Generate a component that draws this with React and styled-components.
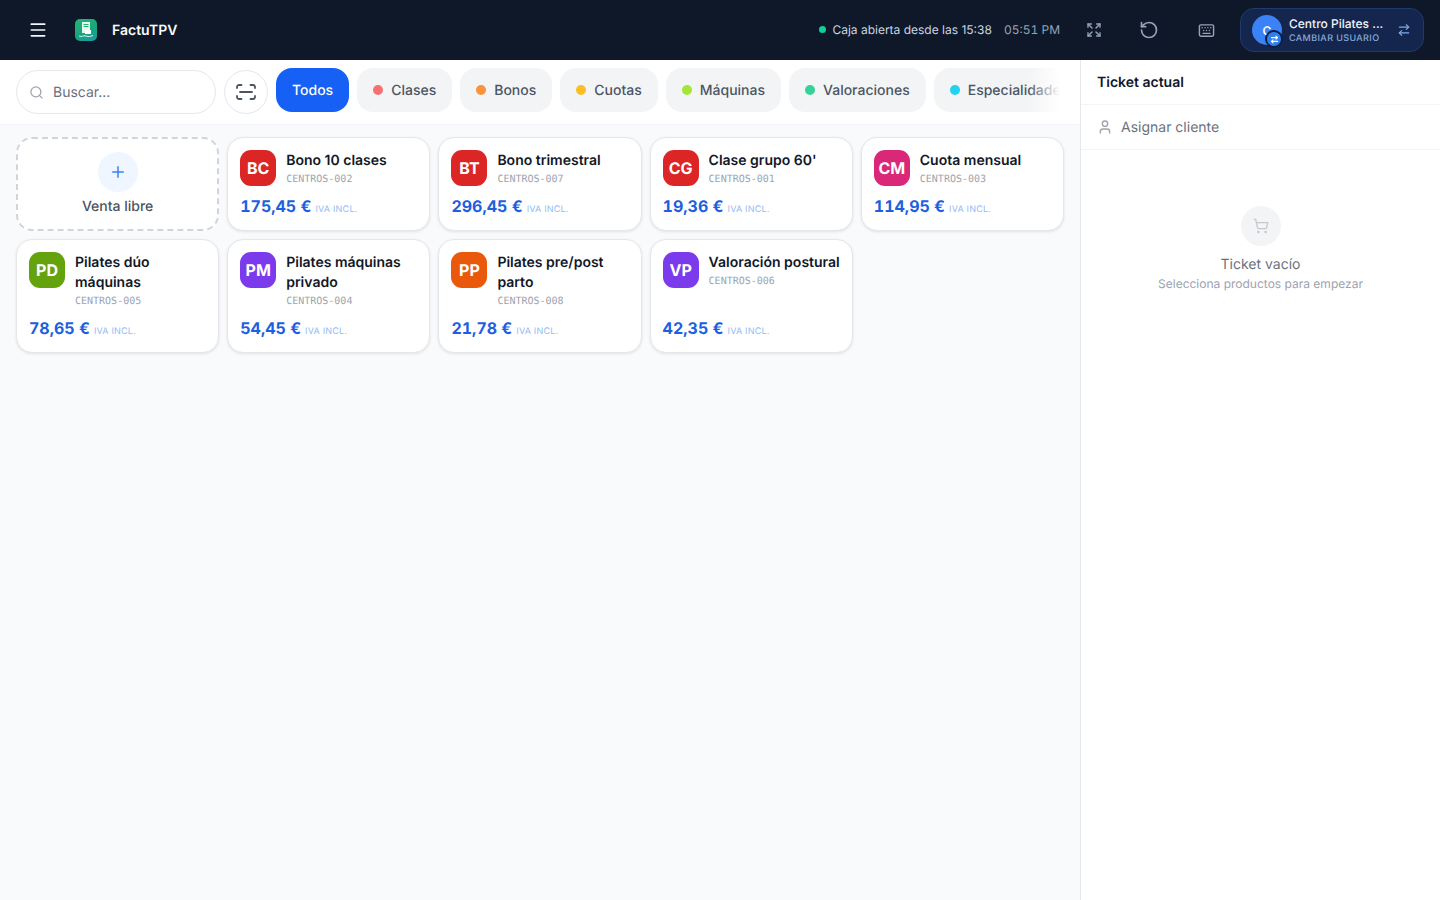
import styled, { createGlobalStyle } from "styled-components";
import { ArrowRightLeft, Expand, Keyboard, Menu, Plus, RotateCcw, Search, ShoppingCart, User } from "lucide-react";

const Global = createGlobalStyle`
    * { box-sizing: border-box; }
    html, body { margin: 0; height: 100%; }
    body {
        font-family: Inter, "Liberation Sans", sans-serif;
        background: #f8fafc;
        text-rendering: geometricPrecision;
    }
`;

const Page = styled.div`
    width: 1440px;
    height: 900px;
    display: flex;
    flex-direction: column;
    overflow: hidden;
`;
const Header = styled.header`
    height: 60px;
    flex: none;
    background: #0f1828;
    display: flex;
    align-items: center;
    padding: 0 16px 0 28px;
    color: white;
`;
const Burger = styled.div`
    width: 20px;
    display: flex;
    color: #f1f5f9;
    margin-right: 27px;
`;
const Logo = styled.div`
    width: 22px;
    height: 22px;
    border-radius: 5px;
    background: linear-gradient(160deg, #22b573 0%, #17a57f 60%, #1b9aa8 100%);
    display: flex;
    align-items: center;
    justify-content: center;
    margin-right: 15px;
`;
const Brand = styled.div`
    font-size: 14px;
    font-weight: 600;
    color: #f8fafc;
`;
const Status = styled.div`
    margin-left: auto;
    display: flex;
    align-items: center;
    font-size: 12px;
    color: #cbd5e1;
    padding-bottom: 1px;
`;
const Dot = styled.span`
    width: 7px;
    height: 7px;
    border-radius: 50%;
    background: ${props => props.color};
    margin-right: ${props => props.gap || 6}px;
    flex: none;
`;
const Clock = styled.div`
    font-size: 12px;
    color: #94a3b8;
    margin-left: 12px;
    margin-right: 27px;
    padding-bottom: 1px;
    font-variant-numeric: tabular-nums;
`;
const HeaderIcon = styled.div`
    width: 14px;
    display: flex;
    justify-content: center;
    color: ${props => props.color || "#94a3b8"};
    margin-right: ${props => props.gap}px;
    svg { flex: none; }
`;
const UserButton = styled.div`
    width: 184px;
    height: 44px;
    border-radius: 14px;
    border: 1px solid #1e3a6e;
    background: #14264d;
    display: flex;
    align-items: center;
    padding: 0 12px 0 11px;
`;
const Avatar = styled.div`
    position: relative;
    width: 30px;
    height: 30px;
    border-radius: 50%;
    background: #3b82f6;
    color: white;
    font-size: 12px;
    font-weight: 600;
    display: flex;
    align-items: center;
    justify-content: center;
    margin-right: 7px;
    flex: none;
`;
const SwapBadge = styled.div`
    position: absolute;
    right: -1px;
    bottom: -3px;
    width: 18px;
    height: 18px;
    border-radius: 50%;
    background: #2f80ed;
    border: 2px solid #0f1f45;
    display: flex;
    align-items: center;
    justify-content: center;
    color: white;
`;
const UserText = styled.div`
    flex: 1;
    min-width: 0;
    display: flex;
    flex-direction: column;
`;
const UserName = styled.div`
    font-size: 12px;
    font-weight: 500;
    line-height: 15px;
    color: #f1f5f9;
`;
const UserRole = styled.div`
    font-size: 9px;
    font-weight: 500;
    line-height: 14px;
    margin-bottom: -1px;
    padding-top: 1px;
    letter-spacing: 0.4px;
    color: #86a9de;
`;

const Body = styled.div`
    flex: 1;
    display: flex;
    min-height: 0;
`;
const Main = styled.main`
    width: 1080px;
    flex: none;
    display: flex;
    flex-direction: column;
`;
const Toolbar = styled.div`
    height: 65px;
    flex: none;
    background: white;
    border-bottom: 1px solid #f1f5f9;
    display: flex;
    align-items: flex-start;
    padding: 8px 20px 0 16px;
`;
const SearchBox = styled.div`
    width: 200px;
    height: 44px;
    margin-top: 2px;
    flex: none;
    border-radius: 22px;
    border: 1px solid #e5e7eb;
    background: white;
    display: flex;
    align-items: center;
    gap: 9px;
    padding: 0 12px;
    color: #9ca3af;
    font-size: 14px;
`;
const Placeholder = styled.span`
    color: #6b7280;
`;
const ScanButton = styled.div`
    width: 44px;
    height: 44px;
    margin: 2px 8px 0;
    flex: none;
    border-radius: 50%;
    border: 1px solid #e5e7eb;
    display: flex;
    align-items: center;
    justify-content: center;
    color: #4b5563;
`;
const Pills = styled.div`
    position: relative;
    flex: 1;
    min-width: 0;
    display: flex;
    gap: 8px;
    overflow: hidden;
    &::after {
        content: "";
        position: absolute;
        top: 0;
        right: 0;
        bottom: 0;
        width: 32px;
        background: linear-gradient(to right, rgba(255,255,255,0), white);
    }
`;
const Pill = styled.div`
    height: 44px;
    flex: none;
    border-radius: 16px;
    padding: 0 16px;
    display: flex;
    align-items: center;
    gap: 8px;
    font-size: 14px;
    font-weight: 500;
    background: ${props => props.active ? "#1660f5" : "#f3f4f6"};
    color: ${props => props.active ? "white" : "#4b5563"};
`;
const PillDot = styled.span`
    width: 10px;
    height: 10px;
    border-radius: 50%;
    background: ${props => props.color};
`;

const Grid = styled.div`
    display: grid;
    grid-template-columns: repeat(5, 1fr);
    gap: 8px;
    padding: 12px 16px;
    align-items: stretch;
`;
const Card = styled.div`
    background: white;
    border-radius: 16px;
    border: 1px solid #e5e7eb;
    box-shadow: 0 1px 3px rgba(0,0,0,0.1);
    padding: 12px;
    display: flex;
    flex-direction: column;
`;
const FreeCard = styled.div`
    background: white;
    border-radius: 16px;
    border: 2px dashed #d1d5db;
    display: flex;
    flex-direction: column;
    align-items: center;
    padding-top: 13px;
    gap: 6px;
    font-size: 14px;
    font-weight: 500;
    color: #4b5563;
`;
const PlusCircle = styled.div`
    width: 40px;
    height: 40px;
    border-radius: 50%;
    background: #eff6ff;
    color: #3b82f6;
    display: flex;
    align-items: center;
    justify-content: center;
`;
const CardTop = styled.div`
    display: flex;
    gap: 10px;
    flex: 1;
`;
const Initials = styled.div`
    width: 36px;
    height: 36px;
    flex: none;
    border-radius: 11px;
    background: ${props => props.color};
    color: white;
    font-size: 16px;
    font-weight: 700;
    display: flex;
    align-items: center;
    justify-content: center;
`;
const CardInfo = styled.div`
    min-width: 0;
    padding-top: 1px;
`;
const CardName = styled.div`
    font-size: 14px;
    font-weight: 600;
    line-height: 20px;
    color: #111827;
`;
const Sku = styled.div`
    font-family: "DejaVu Sans Mono", "Liberation Mono", monospace;
    font-size: 10px;
    line-height: 14px;
    margin: 2px 0 -1px;
    color: #9ca3af;
`;
const PriceRow = styled.div`
    display: flex;
    align-items: baseline;
    gap: 4px;
    margin-top: 8px;
`;
const Price = styled.div`
    font-size: 16px;
    font-weight: 700;
    line-height: 24px;
    color: #1d5fe0;
    font-variant-numeric: tabular-nums;
`;
const Tax = styled.div`
    font-size: 9px;
    letter-spacing: 0.2px;
    color: #93bbf5;
`;

const Side = styled.aside`
    width: 360px;
    flex: none;
    background: white;
    border-left: 1px solid #e5e7eb;
    display: flex;
    flex-direction: column;
`;
const SideTitle = styled.div`
    height: 45px;
    border-bottom: 1px solid #f3f4f6;
    padding: 0 16px;
    display: flex;
    align-items: center;
    font-size: 14px;
    font-weight: 600;
    color: #111827;
`;
const Customer = styled.div`
    height: 45px;
    border-bottom: 1px solid #f3f4f6;
    padding: 0 16px;
    display: flex;
    align-items: center;
    gap: 8px;
    font-size: 14px;
    color: #6b7280;
`;
const Empty = styled.div`
    display: flex;
    flex-direction: column;
    align-items: center;
    padding-top: 56px;
`;
const EmptyIcon = styled.div`
    width: 40px;
    height: 40px;
    border-radius: 50%;
    background: #f3f4f6;
    color: #c4c9d1;
    display: flex;
    align-items: center;
    justify-content: center;
    margin-bottom: 9px;
`;
const EmptyTitle = styled.div`
    font-size: 14px;
    line-height: 20px;
    color: #6b7280;
`;
const EmptyText = styled.div`
    font-size: 12px;
    line-height: 18px;
    color: #9ca3af;
`;

const categories = [
    ["Clases", "#f87171"],
    ["Bonos", "#fb923c"],
    ["Cuotas", "#fbbf24"],
    ["Máquinas", "#a3e635"],
    ["Valoraciones", "#34d399"],
    ["Especialidades", "#22d3ee"],
];

const products = [
    ["BC", "#dc2626", "Bono 10 clases", "CENTROS-002", "175,45 €"],
    ["BT", "#dc2626", "Bono trimestral", "CENTROS-007", "296,45 €"],
    ["CG", "#dc2626", "Clase grupo 60'", "CENTROS-001", "19,36 €"],
    ["CM", "#db2777", "Cuota mensual", "CENTROS-003", "114,95 €"],
    ["PD", "#65a30d", "Pilates dúo máquinas", "CENTROS-005", "78,65 €"],
    ["PM", "#7c3aed", "Pilates máquinas privado", "CENTROS-004", "54,45 €"],
    ["PP", "#ea580c", "Pilates pre/post parto", "CENTROS-008", "21,78 €"],
    ["VP", "#7c3aed", "Valoración postural", "CENTROS-006", "42,35 €"],
];

const LogoMark = () => (
    <svg width="16" height="18" viewBox="0 0 16 18" fill="none">
        <path d="M4 1h8v11H4z" fill="#e8f8f0" />
        <path d="M5.5 3.5h5M5.5 5.5h5" stroke="#22b573" strokeWidth="1" />
        <path d="M7 9h6v4H7z" fill="#fff" />
        <path d="M1 15c3 1.5 4-1 7 0s4 .5 7-.5" stroke="#d5f5e6" strokeWidth="1" />
    </svg>
);

const ScanIcon = () => (
    <svg width="22" height="16" viewBox="0 0 22 16" fill="none" stroke="currentColor" strokeWidth="1.8" strokeLinecap="round" strokeLinejoin="round">
        <path d="M2 4V3a2 2 0 0 1 2-2h2.5M15.5 1H18a2 2 0 0 1 2 2v1M20 12v1a2 2 0 0 1-2 2h-2.5M6.5 15H4a2 2 0 0 1-2-2v-1M5 8h12" />
    </svg>
);

const App = () => {
    return (
        <Page>
            <Global />
            <Header>
                <Burger><Menu size={20} /></Burger>
                <Logo><LogoMark /></Logo>
                <Brand>FactuTPV</Brand>
                <Status>
                    <Dot color="#10d09a" />
                    Caja abierta desde las 15:38
                </Status>
                <Clock>05:51 PM</Clock>
                <HeaderIcon gap={41}><Expand size={16} /></HeaderIcon>
                <HeaderIcon gap={43}><RotateCcw size={20} /></HeaderIcon>
                <HeaderIcon gap={27}><Keyboard size={17} /></HeaderIcon>
                <UserButton>
                    <Avatar>
                        C
                        <SwapBadge><ArrowRightLeft size={9} strokeWidth={3} /></SwapBadge>
                    </Avatar>
                    <UserText>
                        <UserName>Centro Pilates ...</UserName>
                        <UserRole>CAMBIAR USUARIO</UserRole>
                    </UserText>
                    <HeaderIcon color="#7fa9e6" gap={0}><ArrowRightLeft size={14} /></HeaderIcon>
                </UserButton>
            </Header>
            <Body>
                <Main>
                    <Toolbar>
                        <SearchBox>
                            <Search size={15} />
                            <Placeholder>Buscar...</Placeholder>
                        </SearchBox>
                        <ScanButton><ScanIcon /></ScanButton>
                        <Pills>
                            <Pill active>Todos</Pill>
                            {categories.map(([name, color]) => (
                                <Pill key={name}><PillDot color={color} />{name}</Pill>
                            ))}
                        </Pills>
                    </Toolbar>
                    <Grid>
                        <FreeCard>
                            <PlusCircle><Plus size={18} /></PlusCircle>
                            Venta libre
                        </FreeCard>
                        {products.map(([code, color, name, sku, price]) => (
                            <Card key={sku}>
                                <CardTop>
                                    <Initials color={color}>{code}</Initials>
                                    <CardInfo>
                                        <CardName>{name}</CardName>
                                        <Sku>{sku}</Sku>
                                    </CardInfo>
                                </CardTop>
                                <PriceRow>
                                    <Price>{price}</Price>
                                    <Tax>IVA INCL.</Tax>
                                </PriceRow>
                            </Card>
                        ))}
                    </Grid>
                </Main>
                <Side>
                    <SideTitle>Ticket actual</SideTitle>
                    <Customer><User size={16} color="#9ca3af" />Asignar cliente</Customer>
                    <Empty>
                        <EmptyIcon><ShoppingCart size={16} /></EmptyIcon>
                        <EmptyTitle>Ticket vacío</EmptyTitle>
                        <EmptyText>Selecciona productos para empezar</EmptyText>
                    </Empty>
                </Side>
            </Body>
        </Page>
    );
};

export default App;
